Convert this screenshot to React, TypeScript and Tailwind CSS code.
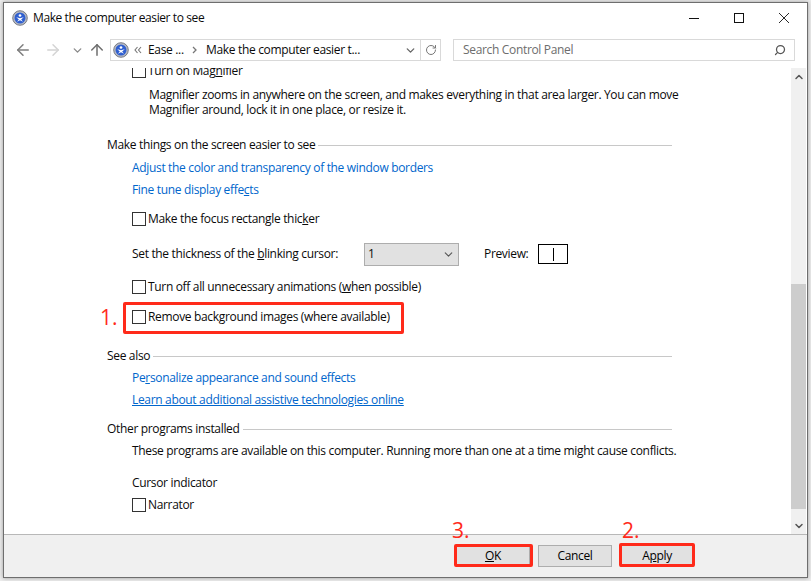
import type { ReactNode } from 'react'
import { ArrowLeft, ArrowRight, ArrowUp, ChevronDown, ChevronUp, RotateCw, Search } from 'lucide-react'

function ShieldIcon({ size = 18 }: { size?: number }) {
  return (
    <svg width={size} height={size} viewBox="0 0 18 18" className="shrink-0">
      <circle cx="9" cy="9" r="8.2" fill="#b9bcc4" stroke="#6b6f7a" strokeWidth="1" />
      <circle cx="9" cy="9" r="6.2" fill="#2f5fd0" />
      <circle cx="9" cy="6.2" r="1.5" fill="#ffffff" />
      <path d="M4.8 8.2 L9 9.2 L13.2 8.2 L10.3 10.6 L12.4 13.2 L9 11.6 L5.6 13.2 L7.7 10.6 Z" fill="#ffffff" />
    </svg>
  )
}

function Check({ label }: { label: ReactNode }) {
  return (
    <div className="flex items-center gap-[2px]">
      <span className="w-[14px] h-[14px] border border-[#333333] bg-white shrink-0" />
      <span>{label}</span>
    </div>
  )
}

function SectionHead({ title }: { title: string }) {
  return (
    <div className="flex items-center gap-[3px] ml-[103px] w-[565px]">
      <span>{title}</span>
      <span className="flex-1 h-px bg-[#c8c8c8]" />
    </div>
  )
}

function Link({ children }: { children: ReactNode }) {
  return <div className="text-[#0066cc]">{children}</div>
}

function Btn({ children }: { children: ReactNode }) {
  return (
    <button className="w-[74px] h-[22px] bg-[#e1e1e1] border border-[#adadad] text-black flex items-center justify-center">
      {children}
    </button>
  )
}

export default function App() {
  return (
    <div className="w-[811px] h-[581px] bg-[#ececec] pl-[3px] pr-[3px] pt-[2px] pb-[3px] font-['Open_Sans','Noto_Sans',sans-serif] text-[12px] leading-[16px] text-[#0a0a0a] tracking-[-0.33px]">
      <div className="relative w-full h-full border border-[#6e6e6e] bg-white flex flex-col overflow-hidden shadow-[0_0_4px_rgba(0,0,0,0.35)]">
        {/* title bar */}
        <div className="h-[29px] flex items-center shrink-0 pl-[8px] pt-[1px]">
          <ShieldIcon size={16} />
          <span className="ml-[5px] tracking-[-0.4px]">Make the computer easier to see</span>
          <div className="ml-auto flex items-center">
            <span className="w-[45px] flex justify-center">
              <svg width="10" height="10" viewBox="0 0 10 10"><path d="M0 5.5h10" stroke="#111" strokeWidth="1" /></svg>
            </span>
            <span className="w-[45px] flex justify-center">
              <svg width="10" height="10" viewBox="0 0 10 10"><rect x="0.5" y="0.5" width="9" height="9" fill="none" stroke="#111" strokeWidth="1" /></svg>
            </span>
            <span className="w-[46px] flex justify-center">
              <svg width="10" height="10" viewBox="0 0 10 10"><path d="M0 0l10 10M10 0L0 10" stroke="#111" strokeWidth="0.9" /></svg>
            </span>
          </div>
        </div>

        {/* nav bar */}
        <div className="h-[22px] mt-[7px] flex items-center shrink-0">
          <span className="ml-[10px] w-[18px]"><ArrowLeft size={18} color="#7e7e7e" strokeWidth={2} /></span>
          <span className="ml-[12px] w-[18px]"><ArrowRight size={18} color="#d4d4d4" strokeWidth={2} /></span>
          <span className="ml-[8px] w-[14px] flex justify-center"><ChevronDown size={13} color="#8a8a8a" strokeWidth={2.5} /></span>
          <span className="ml-[4px] w-[18px]"><ArrowUp size={18} color="#6e6e6e" strokeWidth={2} /></span>
          <div className="ml-[4px] w-[331px] h-[22px] border border-[#d9d9d9] flex items-center">
            <span className="ml-[2px]"><ShieldIcon size={16} /></span>
            <span className="ml-[5px]">
              <svg width="8" height="8" viewBox="0 0 8 8" className="block"><path d="M3.5 1L1 4l2.5 3M7 1L4.5 4 7 7" fill="none" stroke="#777" strokeWidth="1.1" /></svg>
            </span>
            <span className="ml-[6px] w-[44px]">Ease ...</span>
            <span>
              <svg width="6" height="8" viewBox="0 0 6 8" className="block"><path d="M1 1l3 3-3 3" fill="none" stroke="#777" strokeWidth="1.3" /></svg>
            </span>
            <span className="ml-[8px]">Make the computer easier t...</span>
            <span className="ml-auto mr-[3px]"><ChevronDown size={13} color="#666666" strokeWidth={2.5} /></span>
            <span className="w-[20px] h-full border-l border-[#d9d9d9] flex items-center justify-center"><RotateCw size={12} color="#777777" /></span>
          </div>
          <div className="ml-[12px] w-[342px] h-[22px] border border-[#d9d9d9] flex items-center pl-[9px] text-[#6d6d6d]">
            Search Control Panel
            <span className="ml-auto mr-[8px]"><Search size={12} color="#555555" strokeWidth={2.5} className="-scale-x-100" /></span>
          </div>
        </div>

        {/* scrolled content */}
        <div className="flex-1 min-h-0 mt-[7px] flex">
          <div className="flex-1 overflow-hidden">
            <div className="-mt-[5px]">
              <div className="ml-[128px]"><Check label={<>Turn on Mag<u>n</u>ifier</>} /></div>
              <div className="ml-[145px] mt-[8px] leading-[15px] w-[560px]">
                Magnifier zooms in anywhere on the screen, and makes everything in that area larger. You can move<br />
                Magnifier around, lock it in one place, or resize it.
              </div>
              <div className="mt-[20px]"><SectionHead title="Make things on the screen easier to see" /></div>
              <div className="ml-[128px] mt-[7px] space-y-[6px]">
                <Link>Adjust the color and transparency of the window borders</Link>
                <Link>Fine tune display effe<u>c</u>ts</Link>
              </div>
              <div className="ml-[128px] mt-[13px]"><Check label={<>Make the focus rectangle thic<u>k</u>er</>} /></div>
              <div className="ml-[128px] mt-[16px] flex items-center h-[22px]">
                <span className="w-[232px]">Set the thickness of the <u>b</u>linking cursor:</span>
                <span className="w-[95px] h-[23px] bg-[#e1e1e1] border border-[#adadad] flex items-center pl-[3px]">
                  1
                  <ChevronDown size={13} color="#555555" className="ml-auto mr-[3px]" />
                </span>
                <span className="ml-[25px]">Preview:</span>
                <span className="ml-[10px] w-[30px] h-[20px] border border-black flex items-center justify-center">
                  <span className="w-px h-[13px] bg-black" />
                </span>
              </div>
              <div className="ml-[128px] mt-[14px]"><Check label={<>Turn off all unnecessary animations (<u>w</u>hen possible)</>} /></div>
              <div className="ml-[128px] mt-[14px]"><Check label={<>Remove back<u>g</u>round images (where available)</>} /></div>
              <div className="mt-[23px]"><SectionHead title="See also" /></div>
              <div className="ml-[128px] mt-[6px] space-y-[6px]">
                <Link>Pe<u>r</u>sonalize appearance and sound effects</Link>
                <Link><u>Learn about additional assistive technologies online</u></Link>
              </div>
              <div className="mt-[13px]"><SectionHead title="Other programs installed" /></div>
              <div className="ml-[128px] mt-[6px]">These programs are available on this computer. Running more than one at a time might cause conflicts.</div>
              <div className="ml-[128px] mt-[16px]">Cursor indicator</div>
              <div className="ml-[128px] mt-[6px]"><Check label="Narrator" /></div>
            </div>
          </div>
          {/* scrollbar */}
          <div className="w-[15px] mr-[1px] bg-[#f0f0f0] flex flex-col items-center shrink-0">
            <div className="h-[17px] flex items-center"><ChevronUp size={12} color="#555555" strokeWidth={3} /></div>
            <div className="flex-1 w-full flex flex-col">
              <div className="h-[199px]" />
              <div className="h-[225px] bg-[#cdcdcd]" />
            </div>
            <div className="h-[17px] flex items-center"><ChevronDown size={12} color="#555555" strokeWidth={3} /></div>
          </div>
        </div>

        {/* footer */}
        <div className="h-[43px] shrink-0 bg-[#f0f0f0] border-t border-[#b8b8b8] flex items-center justify-end gap-[8px] pr-[113px]">
          <Btn><span><u>O</u>K</span></Btn>
          <Btn>Cancel</Btn>
          <Btn><span>A<u>p</u>ply</span></Btn>
        </div>

        {/* annotations */}
        <span className="absolute left-[119px] top-[299px] w-[281px] h-[32px] border-[3px] border-[#ff2a1a] rounded-[2px]" />
        <span className="absolute left-[450px] top-[541px] w-[79px] h-[23px] border-[3px] border-[#ff2a1a] rounded-[2px]" />
        <span className="absolute left-[615px] top-[540px] w-[76px] h-[24px] border-[3px] border-[#ff2a1a] rounded-[2px]" />
        <span className="absolute left-[96px] top-[302px] text-[#ff2a1a] text-[21px] leading-[24px] tracking-normal">1.</span>
        <span className="absolute left-[448px] top-[515px] text-[#ff2a1a] text-[21px] leading-[24px] tracking-normal">3.</span>
        <span className="absolute left-[618px] top-[515px] text-[#ff2a1a] text-[21px] leading-[24px] tracking-normal">2.</span>
      </div>
    </div>
  )
}
